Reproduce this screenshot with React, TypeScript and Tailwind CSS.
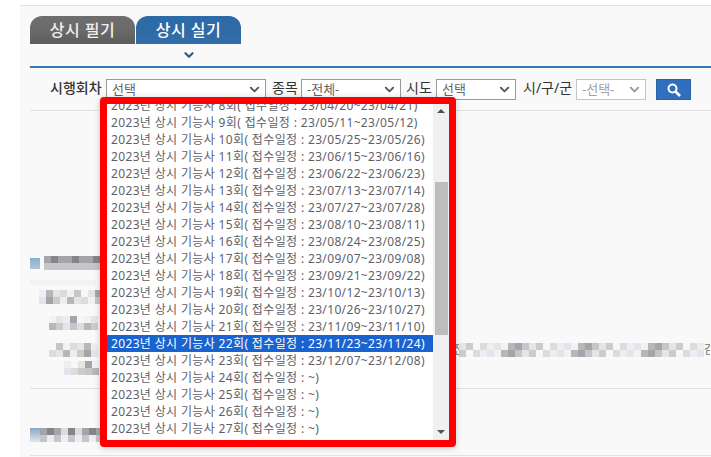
import { ChevronDown } from 'lucide-react';

const FONT = "font-['Noto_Sans','Noto_Sans_CJK_KR',sans-serif]";

const ROUNDS = [
  { no: 8, date: '23/04/20~23/04/21' },
  { no: 9, date: '23/05/11~23/05/12' },
  { no: 10, date: '23/05/25~23/05/26' },
  { no: 11, date: '23/06/15~23/06/16' },
  { no: 12, date: '23/06/22~23/06/23' },
  { no: 13, date: '23/07/13~23/07/14' },
  { no: 14, date: '23/07/27~23/07/28' },
  { no: 15, date: '23/08/10~23/08/11' },
  { no: 16, date: '23/08/24~23/08/25' },
  { no: 17, date: '23/09/07~23/09/08' },
  { no: 18, date: '23/09/21~23/09/22' },
  { no: 19, date: '23/10/12~23/10/13' },
  { no: 20, date: '23/10/26~23/10/27' },
  { no: 21, date: '23/11/09~23/11/10' },
  { no: 22, date: '23/11/23~23/11/24' },
  { no: 23, date: '23/12/07~23/12/08' },
  { no: 24, date: '~' },
  { no: 25, date: '~' },
  { no: 26, date: '~' },
  { no: 27, date: '~' },
];

const TONES = [
  'bg-[#f4f2f0]',
  'bg-[#dcdcdc]',
  'bg-[#e8e4e2]',
  'bg-[#b8b6b8]',
  'bg-[#eceef2]',
  'bg-[#cfcbc8]',
  'bg-[#a4a4aa]',
  'bg-[#e2e6ec]',
  'bg-[#f7f7f7]',
  'bg-[#c4c6ca]',
];

// blurred text in the screenshot: rows of square blocks
function Mosaic({ cols, seed = 1, dark = false }: { cols: number; seed?: number; dark?: boolean }) {
  const rows = [0, 1];
  return (
    <div className="flex flex-col">
      {rows.map((r) => (
        <div key={r} className="flex">
          {Array.from({ length: cols }).map((_, i) => {
            const tone = TONES[(i * 7 + r * 3 + seed * (i + 2)) % TONES.length];
            return (
              <div key={i} className={`h-[7px] w-[7px] ${dark && r === 0 && i % 3 === 1 ? 'bg-[#87838a]' : tone}`} />
            );
          })}
        </div>
      ))}
    </div>
  );
}

function Select({ label, className, muted }: { label: string; className: string; muted?: boolean }) {
  return (
    <div
      className={`flex h-[21px] items-center justify-between border bg-white pl-[5px] pr-[3px] text-[13px] ${
        muted ? 'border-[#c4c4c4] text-[#a0a0a0]' : 'border-[#9a9a9a] text-[#666]'
      } ${className}`}
    >
      <span>{label}</span>
      <ChevronDown size={15} strokeWidth={3} className={muted ? 'text-[#999]' : 'text-[#555]'} />
    </div>
  );
}

function Dropdown() {
  return (
    <div className="absolute left-[100px] top-[97px] h-[350px] w-[356px] rounded-[4px] border-[7px] border-[#ff0000] bg-white shadow-[0_1px_6px_rgba(0,0,0,0.2)]">
      <div className="flex h-full">
        <div className="h-full w-[326px] overflow-hidden">
          <div className="-mt-[7px]">
            {ROUNDS.map((r) => (
              <div
                key={r.no}
                className={`h-[17px] pl-[4px] text-[12px] leading-[17px] whitespace-nowrap tracking-[0.35px] ${
                  r.no === 22 ? 'bg-[#1a63cf] text-white' : 'text-[#5f5f68]'
                }`}
              >
                2023년 상시 기능사 {r.no}회( 접수일정 : {r.date})
              </div>
            ))}
          </div>
        </div>
        <div className="relative h-full w-[16px] bg-[#f0f0f0]">
          <div className="absolute left-[4px] top-[5px] h-0 w-0 border-x-[4px] border-b-[4px] border-x-transparent border-b-[#505050]" />
          <div className="absolute left-[2px] top-[78px] h-[153px] w-[13px] bg-[#bdbdbd]" />
          <div className="absolute left-[4px] bottom-[6px] h-0 w-0 border-x-[4px] border-t-[4px] border-x-transparent border-t-[#505050]" />
        </div>
      </div>
    </div>
  );
}

export default function App() {
  return (
    <div className={`relative h-[457px] w-[711px] overflow-hidden bg-white ${FONT}`}>
      <div className="ml-[20px] mt-[5px] h-[452px] border-t border-[#e2e2e2] bg-[#f9f9f9] pl-[10px]">
        <div className="flex gap-px pt-[10px]">
          <div className="flex h-[28px] w-[105px] items-center justify-center rounded-t-[12px] bg-gradient-to-b from-[#6e6e6e] via-[#6a6a6a] to-[#5c5c5c] text-[16px] font-medium tracking-[0.5px] text-[#f0f0f0]">
            상시 필기
          </div>
          <div className="flex h-[28px] w-[105px] items-center justify-center rounded-t-[12px] bg-gradient-to-b from-[#2a6ba8] via-[#2f6aa5] to-[#336ea8] text-[16px] font-medium tracking-[0.5px] text-white">
            상시 실기
          </div>
        </div>
        <div className="ml-[106px] flex h-[22px] w-[105px] items-center justify-center">
          <ChevronDown size={14} strokeWidth={4} className="text-[#2f5f92]" />
        </div>
        <div className="h-[2px] bg-[#3a77b4]" />

        <div className="flex h-[43px] items-start border-b border-[#e2e2e2] pl-[20px] pt-[11px] text-[14px] text-[#333]">
          <span className="w-[56px] leading-[18px] font-medium">시행회차</span>
          <Select label="선택" className="w-[160px]" />
          <span className="ml-[6px] w-[29px] leading-[18px]">종목</span>
          <Select label="-전체-" className="w-[100px]" />
          <span className="ml-[5px] w-[30px] leading-[18px]">시도</span>
          <Select label="선택" className="w-[80px]" />
          <span className="ml-[7px] w-[53px] leading-[18px]">시/구/군</span>
          <Select label="-선택-" className="w-[70px]" muted />
          <button className="ml-[10px] flex h-[21px] w-[35px] items-center justify-center border border-[#2a63ad] bg-[#2f6fbd]">
            <svg width="14" height="14" viewBox="0 0 14 14" fill="none" stroke="white">
              <circle cx="5.5" cy="5.5" r="4" strokeWidth="2" />
              <path d="M8.5 8.5 L13 13" strokeWidth="2.6" />
            </svg>
          </button>
        </div>

        <div className="pt-[145px]">
          <div className="flex h-[14px] items-center">
            <div className="h-[11px] w-[10px] bg-gradient-to-b from-[#87b0d0] to-[#b2c6d6]" />
            <div className="ml-[4px]">
              <Mosaic cols={8} seed={3} dark />
            </div>
          </div>
          <div className="mt-[10px] h-[5px] w-[66px] bg-[#f2f2f2]" />
          <div className="ml-[9px] mt-[5px]">
            <Mosaic cols={9} seed={2} />
          </div>
          <div className="ml-[19px] mt-[12px]">
            <Mosaic cols={7} seed={5} />
          </div>
          <div className="ml-[19px] mt-[13px] flex">
            <Mosaic cols={7} seed={4} />
            <div className="ml-[355px] flex items-start text-[12px] leading-[14px] text-[#777]">
              <span className="w-[6px] overflow-hidden">전</span>
              <Mosaic cols={35} seed={6} />
              <span className="w-[6px] overflow-hidden">감</span>
            </div>
          </div>
          <div className="ml-[34px] mt-[4px]">
            <Mosaic cols={5} seed={7} />
          </div>
          <div className="mt-[13px] h-px bg-[#e2e2e2]" />
          <div className="mt-[39px] flex items-center">
            <div className="h-[14px] w-[10px] bg-gradient-to-b from-[#87a8c8] to-[#dfe6ec]" />
            <Mosaic cols={9} seed={8} dark />
          </div>
          <div className="mt-[13px] h-px bg-[#e2e2e2]" />
        </div>
      </div>
      <Dropdown />
    </div>
  );
}
